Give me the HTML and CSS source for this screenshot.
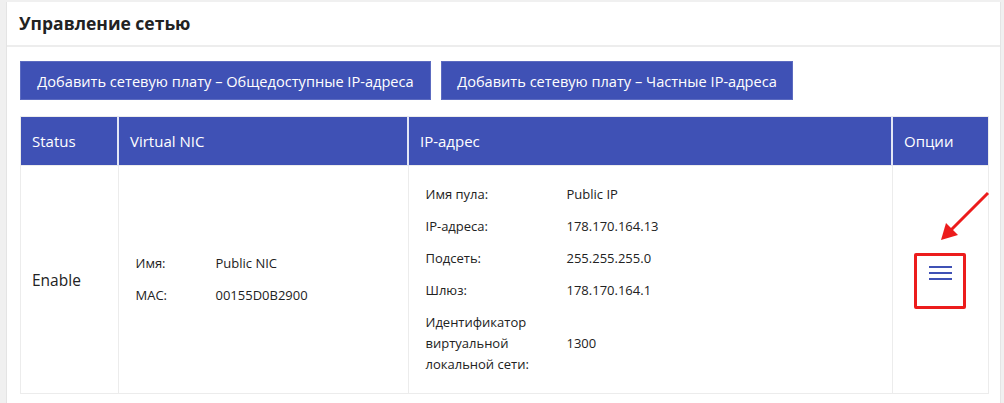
FILE: index.html
```html
<!DOCTYPE html>
<html lang="ru">
<head>
  <meta charset="UTF-8" />
  <meta name="viewport" content="width=device-width, initial-scale=1.0" />
  <title>Управление сетью</title>
  <link rel="stylesheet" href="styles.css">
</head>
<body>
  <div class="panel">
    <div class="panel-heading">Управление сетью</div>
    <div class="panel-body">
      <div class="acciones">
        <button class="btn btn-publico">Добавить сетевую плату – Общедоступные IP-адреса</button>
        <button class="btn btn-privado">Добавить сетевую плату – Частные IP-адреса</button>
      </div>

      <table class="tabla">
        <thead>
          <tr>
            <th class="col-status">Status</th>
            <th class="col-nic">Virtual NIC</th>
            <th class="col-ip">IP-адрес</th>
            <th class="col-opciones">Опции</th>
          </tr>
        </thead>
        <tbody>
          <tr>
            <td class="estado">Enable</td>
            <td>
              <div class="datos datos-nic">
                <span>Имя:</span><span>Public NIC</span>
                <span>MAC:</span><span>00155D0B2900</span>
              </div>
            </td>
            <td>
              <div class="datos datos-ip">
                <span>Имя пула:</span><span>Public IP</span>
                <span>IP-адреса:</span><span>178.170.164.13</span>
                <span>Подсеть:</span><span>255.255.255.0</span>
                <span>Шлюз:</span><span>178.170.164.1</span>
                <span>Идентификатор виртуальной локальной сети:</span><span class="centro">1300</span>
              </div>
            </td>
            <td class="opciones">
              <div class="menu-wrap">
                <button class="menu-btn" aria-label="Опции">
                  <svg width="23" height="16" viewBox="0 0 23 16">
                    <rect x="0" y="1" width="23" height="2" fill="#3f51b5"/>
                    <rect x="0" y="7" width="23" height="2" fill="#3f51b5"/>
                    <rect x="0" y="13" width="23" height="2" fill="#3f51b5"/>
                  </svg>
                </button>
                <!-- flecha de la captura -->
                <svg class="flecha" width="54" height="54" viewBox="0 0 54 54">
                  <line x1="51" y1="2" x2="14" y2="39" stroke="#ec1c1c" stroke-width="3"/>
                  <polygon points="4,49 9,32 21,44" fill="#ec1c1c"/>
                </svg>
              </div>
            </td>
          </tr>
        </tbody>
      </table>
    </div>
  </div>
</body>
</html>
```

FILE: styles.css
```css
body {
  margin: 0;
  padding: 2px 3px 0 6px;
  background: #f0f0f0;
  font-family: "Open Sans", "Noto Sans", sans-serif;
  color: #222;
  overflow: hidden;
}
.panel {
  background: white;
  border-left: 1px solid #e4e4e4;
  border-right: 1px solid #e4e4e4;
  height: 420px;
}
.panel-heading {
  height: 43px;
  line-height: 43px;
  padding-left: 12px;
  font-size: 17.5px;
  font-weight: 700;
  color: #222;
  border-bottom: 2px solid #ededed;
}
.panel-body {
  padding: 14px 12px 0 13px;
}
.acciones {
  display: flex;
  gap: 10px;
}
.btn {
  background: #3f51b5;
  color: white;
  border: 1px solid #5c6bc0;
  height: 39px;
  padding: 0;
  font-family: inherit;
  font-size: 14.6px;
  cursor: pointer;
}
.btn-publico {
  width: 411px;
}
.btn-privado {
  width: 352px;
}
.tabla {
  margin-top: 16px;
  width: 969px;
  border-collapse: collapse;
  border: 1px solid #ececec;
}
.tabla th {
  background: #3f51b5;
  color: white;
  height: 48px;
  padding: 0 0 0 11px;
  text-align: left;
  font-size: 15px;
  font-weight: normal;
  border-right: 2px solid #e3e6f5;
}
.tabla th:last-child {
  border-right: none;
}
.col-status { width: 85px; }
.col-nic { width: 277px; }
.col-ip { width: 471px; }
.tabla td {
  border: 1px solid #ececec;
  vertical-align: middle;
  padding: 18px 0 18px 17px;
  height: 190px;
}
.tabla td.estado {
  padding-left: 11px;
  font-size: 15.5px;
}
.datos {
  display: grid;
  row-gap: 11px;
  font-size: 13px;
  line-height: 21px;
}
.datos-nic {
  grid-template-columns: 80px auto;
}
.datos-ip {
  grid-template-columns: 141px auto;
}
.datos-ip span:nth-child(odd) {
  padding-right: 24px;
}
.centro {
  align-self: center;
}
.tabla td.opciones {
  padding: 0;
  text-align: center;
}
.menu-wrap {
  position: relative;
  display: inline-block;
  margin-top: 2px;
}
.menu-btn {
  width: 52px;
  height: 56px;
  padding: 9px 0 0 0;
  background: white;
  border: 3px solid #ec1c1c;
  border-radius: 2px;
  display: flex;
  justify-content: center;
  align-items: flex-start;
  cursor: pointer;
}
.flecha {
  position: absolute;
  left: 23px;
  top: -62px;
}
```
